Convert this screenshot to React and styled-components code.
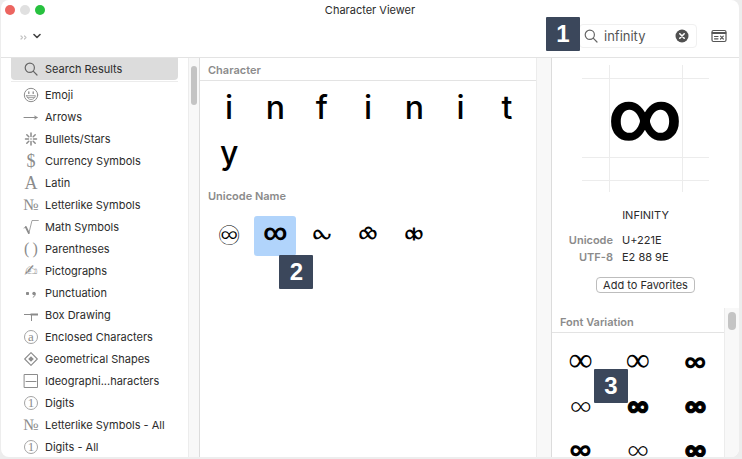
import React, { useState } from 'react';
import styled, { createGlobalStyle } from 'styled-components';

const colors = {
  text: '#2b2b2b',
  muted: '#8b8b8b',
  icon: '#8c8c8c',
  line: '#e3e3e3',
  track: '#f8f8f8',
  thumb: '#c4c4c4',
  badge: '#3b475b',
  selected: '#b1d4fb',
};

const GlobalStyle = createGlobalStyle`
  * { box-sizing: border-box; }

  body {
    margin: 0;
    background: #ededed;
    color: ${colors.text};
    font-family: Inter, 'Liberation Sans', sans-serif;
    font-size: 11px;
    line-height: 16px;
  }

  button, input { font: inherit; color: inherit; }
`;

const Window = styled.div`
  display: flex;
  flex-direction: column;
  height: calc(100vh - 2px);
  margin: 0 3px 2px 1px;
  background: #fff;
  border-radius: 8px;
  overflow: hidden;
`;

const TitleBar = styled.header`
  display: grid;
  grid-template-columns: 1fr auto 1fr;
  align-items: center;
  flex: none;
  height: 20px;
  padding: 0 4px;
`;

const Lights = styled.div`
  display: flex;
  gap: 5px;
`;

const Light = styled.button`
  width: 10px;
  height: 10px;
  padding: 0;
  border: 0;
  border-radius: 50%;
  background: ${props => props.$color};
`;

const Title = styled.h1`
  margin: 0;
  font-size: 11px;
  font-weight: 400;
`;

const Toolbar = styled.div`
  display: flex;
  align-items: center;
  justify-content: space-between;
  flex: none;
  height: 38px;
  padding: 0 12px 6px 18px;
  border-bottom: 1px solid ${colors.line};
`;

const PlainButton = styled.button`
  display: flex;
  align-items: center;
  gap: 4px;
  padding: 0;
  border: 0;
  background: none;
`;

const ToolbarEnd = styled.div`
  display: flex;
  align-items: center;
  gap: 14px;
`;

const SearchBox = styled.label`
  position: relative;
  display: flex;
  align-items: center;
  gap: 6px;
  width: 118px;
  height: 24px;
  padding: 0 7px 0 4px;
  border: 1px solid #f0f0f0;
  border-radius: 4px;
  color: #666;
`;

const SearchInput = styled.input`
  flex: 1;
  min-width: 0;
  padding: 0;
  border: 0;
  outline: none;
  background: none;
  color: #555;
  font-size: 13px;
`;

const Badge = styled.span`
  position: absolute;
  top: ${props => props.$top};
  left: ${props => props.$left};
  z-index: 1;
  width: 34px;
  height: 34px;
  border-radius: 1px;
  background: ${colors.badge};
  color: #fff;
  font: bold 24px/34px 'Liberation Sans', sans-serif;
  text-align: center;
  -webkit-text-stroke: 0;
`;

const Body = styled.div`
  display: flex;
  flex: 1;
  min-height: 0;
`;

const Pane = styled.div`
  display: flex;
  flex: ${props => props.$flex || 'none'};
  min-width: 0;
  min-height: 0;
  width: ${props => props.$width || 'auto'};
  border-right: ${props => (props.$divided ? '1px solid #dcdcdc' : 0)};
`;

const Scroller = styled.div`
  flex: 1;
  min-width: 0;
  overflow: hidden;
`;

const Track = styled.div`
  flex: none;
  width: ${props => props.$width};
  padding: ${props => props.$padding};
  border-left: 1px solid #ececec;
  background: ${colors.track};
`;

const Thumb = styled.div`
  height: ${props => props.$height};
  border-radius: 4px;
  background: ${colors.thumb};
`;

const CategoryList = styled.ul`
  margin: 0;
  padding: 0 10px;
  list-style: none;
`;

// the search results entry is set apart from the real categories
const Category = styled.li`
  &:first-child {
    margin-bottom: 2px;
    padding-bottom: 1px;
    border-bottom: 1px solid #ececec;
  }
`;

const CategoryButton = styled.button`
  display: flex;
  align-items: center;
  gap: 6px;
  width: 100%;
  height: 22px;
  padding: 0 10px 0 12px;
  border: 0;
  border-radius: ${props => (props.$active ? '0 0 4px 4px' : 0)};
  background: ${props => (props.$active ? '#dcdcdc' : 'none')};
  text-align: left;
  white-space: nowrap;
`;

const IconSlot = styled.span`
  display: flex;
  align-items: center;
  justify-content: center;
  flex: none;
  width: 16px;
  height: 20px;
  color: ${props => (props.$dark ? '#666' : colors.icon)};
  font: 16px/20px 'Liberation Serif', 'DejaVu Sans', serif;

  svg { flex: none; }
`;

const LargeGlyph = styled.span`
  font-size: 18px;
`;

const HandGlyph = styled.span`
  font-family: 'DejaVu Sans', sans-serif;
`;

const CircledGlyph = styled.span`
  flex: none;
  width: 14px;
  height: 14px;
  border: 1px solid #a4a4a4;
  border-radius: 50%;
  font-size: 13px;
  line-height: 12px;
  text-align: center;
`;

const SectionTitle = styled.h2`
  margin: 0;
  padding: ${props => props.$padding || '4px 8px 2px'};
  border-bottom: ${props => (props.$lined ? `1px solid ${colors.line}` : 0)};
  color: ${colors.muted};
  font-size: 11px;
  font-weight: 600;
  line-height: 16px;
`;

const CharacterGrid = styled.div`
  display: grid;
  grid-template-columns: repeat(7, 1fr);
  justify-items: center;
  padding: ${props => props.$padding};
`;

const CharacterCell = styled.button`
  position: relative;
  display: flex;
  align-items: center;
  justify-content: center;
  width: 42px;
  height: ${props => props.$height};
  padding: ${props => (props.$weight === 700 ? '0 0 6px' : 0)};
  border: 0;
  border-radius: 3px;
  background: ${props => (props.$selected ? colors.selected : 'none')};
  color: #000;
  font-family: ${props => props.$font || 'inherit'};
  font-size: ${props => props.$size || '32px'};
  font-weight: ${props => props.$weight || 500};
  line-height: ${props => props.$height};
`;

const Details = styled.aside`
  display: flex;
  flex-direction: column;
  flex: none;
  width: 187px;
  min-height: 0;
`;

const Summary = styled.section`
  display: flex;
  flex-direction: column;
  align-items: center;
  flex: none;
  padding: 7px 0 15px;
`;

const CharacterName = styled.p`
  margin: 15px 0 9px;
`;

const Codes = styled.dl`
  display: grid;
  grid-template-columns: 61px 1fr;
  column-gap: 9px;
  width: 100%;
  margin: 0 0 11px;
  line-height: 17px;

  dt {
    color: ${colors.muted};
    font-weight: 600;
    text-align: right;
  }

  dd { margin: 0; }
`;

const FavoriteButton = styled.button`
  height: 16px;
  padding: 0 6px;
  border: 1px solid #bdbdbd;
  border-radius: 4px;
  background: #fff;
  line-height: 14px;
`;

const VariationGrid = styled.div`
  display: grid;
  grid-template-columns: repeat(3, 1fr);
  grid-auto-rows: 44px;
  padding-top: 5px;
`;

const Variation = styled.button`
  position: relative;
  padding: 0;
  border: 0;
  background: none;
  color: #000;
  font-family: ${props => props.$font};
  font-size: ${props => props.$size};
  font-weight: ${props => props.$weight || 400};
  -webkit-text-stroke: ${props => props.$stroke || 0};
  line-height: 44px;
`;

const Svg = ({ size = 16, width, height, children, ...rest }) => (
  <svg
    width={width || size}
    height={height || size}
    viewBox={`0 0 ${width || size} ${height || size}`}
    fill="none"
    stroke="currentColor"
    strokeLinecap="round"
    strokeLinejoin="round"
    aria-hidden="true"
    {...rest}
  >
    {children}
  </svg>
);

const SearchIcon = () => (
  <Svg size={14} strokeWidth="1.2">
    <circle cx="5.8" cy="5.8" r="4.6" />
    <path d="M9.2 9.2 13 13" />
  </Svg>
);

const icons = {
  emoji: (
    <Svg strokeWidth="1">
      <circle cx="8" cy="8" r="6.7" />
      <path d="M5.8 4.8v1.6M10.2 4.8v1.6" strokeWidth="1.3" />
      <path d="M3.6 8.7h8.8c-.4 2.3-2.2 3.8-4.4 3.8S4 11 3.6 8.7ZM4.6 10.4h6.8" strokeWidth=".8" />
    </Svg>
  ),
  arrow: (
    <Svg strokeWidth="1">
      <path d="M1 8.500h13" />
      <path d="m11.800 6.800 2.900 1.700-2.900 1.700Z" fill="currentColor" strokeWidth=".3" />
    </Svg>
  ),
  burst: (
    <Svg strokeWidth="1.5">
      <path d="M8 2v3.500M8 10.500V14M2.500 8h3M10.500 8h3M3.800 3.800l2 2M10.200 10.200l2 2M3.800 12.200l2-2M10.200 5.800l2-2" />
      <circle cx="8" cy="8" r=".8" fill="currentColor" stroke="none" />
    </Svg>
  ),
  root: (
    <Svg strokeWidth=".8">
      <path d="m1 9 1.8-1" />
      <path d="m2.8 8 3 6" strokeWidth="1.8" />
      <path d="M5.8 14.5 9 1.5h6.3" />
    </Svg>
  ),
  punctuation: (
    <Svg strokeWidth="1">
      <rect x="3" y="7" width="3" height="3" rx=".8" fill="currentColor" stroke="none" />
      <circle cx="11" cy="8.5" r="1.7" fill="currentColor" stroke="none" />
      <path d="M12.2 8.8c0 1.8-.7 2.8-2 3.4" />
    </Svg>
  ),
  box: (
    <Svg strokeWidth="1" strokeLinecap="butt">
      <path d="M1 7.5h7M8.5 7v7" />
      <path d="M7.5 7.5H15" strokeWidth="2" />
    </Svg>
  ),
  diamond: (
    <Svg strokeWidth="1.1">
      <path d="M8 1.7 14.3 8 8 14.3 1.7 8Z" />
      <path d="M8 5.2 10.8 8 8 10.8 5.2 8Z" fill="currentColor" stroke="none" />
    </Svg>
  ),
  ideograph: (
    <Svg strokeWidth="1" strokeLinejoin="miter">
      <path d="M1.5 1.5h13v13h-13ZM3 8.5h10" />
    </Svg>
  ),
};

const categories = [
  { name: 'Search Results', icon: <SearchIcon /> },
  { name: 'Emoji', icon: icons.emoji },
  { name: 'Arrows', icon: icons.arrow },
  { name: 'Bullets/Stars', icon: icons.burst },
  { name: 'Currency Symbols', icon: <LargeGlyph>$</LargeGlyph> },
  { name: 'Latin', icon: <LargeGlyph>A</LargeGlyph> },
  { name: 'Letterlike Symbols', icon: '№' },
  { name: 'Math Symbols', icon: icons.root },
  { name: 'Parentheses', icon: '(\u2009)' },
  { name: 'Pictographs', icon: <HandGlyph>✍</HandGlyph> },
  { name: 'Punctuation', icon: icons.punctuation },
  { name: 'Box Drawing', icon: icons.box },
  { name: 'Enclosed Characters', icon: <CircledGlyph>a</CircledGlyph> },
  { name: 'Geometrical Shapes', icon: icons.diamond },
  { name: 'Ideographi...haracters', icon: icons.ideograph },
  { name: 'Digits', icon: <CircledGlyph>1</CircledGlyph> },
  { name: 'Letterlike Symbols - All', icon: '№' },
  { name: 'Digits - All', icon: <CircledGlyph>1</CircledGlyph> },
];

const dejavu = "'DejaVu Sans', sans-serif";
const roboto = 'Roboto, sans-serif';
const lato = 'Lato, sans-serif';
const serif = "'Liberation Serif', serif";

const nameMatches = [
  { name: 'Permanent paper sign', glyph: '♾', font: dejavu, size: '27px', weight: 400 },
  { name: 'Infinity', glyph: '∞', font: roboto, size: '23px', weight: 700, selected: true },
  { name: 'Incomplete infinity', glyph: '⧜', font: dejavu, size: '22px', weight: 700 },
  { name: 'Tie over infinity', glyph: '⧝', font: dejavu, size: '22px', weight: 700 },
  { name: 'Infinity negated with vertical bar', glyph: '⧞', font: dejavu, size: '22px', weight: 700 },
];

const variations = [
  { font: serif, size: '34px' },
  { font: serif, size: '34px' },
  { font: lato, size: '31px', weight: 700 },
  { font: lato, size: '31px', weight: 300 },
  { font: lato, size: '30px', weight: 900, stroke: '1px #000' },
  { font: lato, size: '30px', weight: 900, stroke: '1px #000' },
  { font: lato, size: '31px', weight: 700 },
  { font: lato, size: '31px', weight: 300 },
  { font: lato, size: '30px', weight: 900, stroke: '1px #000' },
];

const PreviewDrawing = () => (
  <svg width="127" height="127" viewBox="0 0 127 127" role="img" aria-label="Infinity">
    <path
      d="M27.5 0v127M100.5 0v127M0 13.5h127M0 92.5h127M0 115.5h127"
      stroke="#ececec"
      fill="none"
    />
    <text x="63" y="75" textAnchor="middle" fontFamily="Roboto, sans-serif" fontSize="71" fontWeight="700">
      ∞
    </text>
  </svg>
);

const App = () => {
  const [query, setQuery] = useState('infinity');
  const [active, setActive] = useState('Search Results');

  return (
    <>
      <GlobalStyle />
      <Window>
        <TitleBar>
          <Lights>
            <Light $color="#ec6560" aria-label="Close" />
            <Light $color="#e0e0e0" aria-label="Minimize" />
            <Light $color="#27c13f" aria-label="Zoom" />
          </Lights>
          <Title>Character Viewer</Title>
        </TitleBar>

        <Toolbar>
          <PlainButton aria-label="View options">
            <Svg size={10} stroke="#c4c4c4" strokeWidth="1.2">
              <path d="m2 5 1.5 1.5L2 8M5.5 5 7 6.5 5.5 8" />
            </Svg>
            <Svg width={8} height={8} stroke="#444" strokeWidth="1.6">
              <path d="m1 2.5 3 3 3-3" />
            </Svg>
          </PlainButton>
          <ToolbarEnd>
            <SearchBox>
              <Badge $top="-8px" $left="-34px">1</Badge>
              <SearchIcon />
              <SearchInput
                aria-label="Search"
                value={query}
                onChange={e => setQuery(e.target.value)}
              />
              <PlainButton aria-label="Clear search" onClick={() => setQuery('')}>
                <Svg size={14} strokeWidth="1.6">
                  <circle cx="7" cy="7" r="6.5" fill="#505050" stroke="none" />
                  <path d="m4.8 4.8 4.4 4.4M9.2 4.8 4.8 9.2" stroke="#fff" />
                </Svg>
              </PlainButton>
            </SearchBox>
            <PlainButton aria-label="Collapse window">
              <Svg width={16} height={14} stroke="#555" strokeWidth="1.2">
                <rect x="1" y="1.5" width="14" height="11" rx="1.5" />
                <path d="M1.5 4h13" strokeWidth="1.8" />
                <path d="M3.5 7.5h3.5M3.5 9.8h3.5M9.5 7.2l2.8 2.8M12.3 7.2 9.5 10" />
              </Svg>
            </PlainButton>
          </ToolbarEnd>
        </Toolbar>

        <Body>
          <Pane as="nav" $width="199px" $divided>
            <Scroller>
              <CategoryList>
                {categories.map(({ name, icon }) => (
                  <Category key={name}>
                    <CategoryButton $active={name === active} onClick={() => setActive(name)}>
                      <IconSlot $dark={name === active}>{icon}</IconSlot>
                      {name}
                    </CategoryButton>
                  </Category>
                ))}
              </CategoryList>
            </Scroller>
            <Track $width="11px" $padding="8px 2px">
              <Thumb $height="39px" />
            </Track>
          </Pane>

          <Pane as="main" $flex="1" $divided>
            <Scroller>
              <SectionTitle $lined>Character</SectionTitle>
              <CharacterGrid $padding="4px 6px 9px">
                {[...'infinity'].map((letter, i) => (
                  <CharacterCell key={i} $height="45px">{letter}</CharacterCell>
                ))}
              </CharacterGrid>
              <SectionTitle>Unicode Name</SectionTitle>
              <CharacterGrid $padding="10px 6px">
                {nameMatches.map(({ name, glyph, font, size, weight, selected }) => (
                  <CharacterCell
                    key={name}
                    $height="40px"
                    $font={font}
                    $size={size}
                    $weight={weight}
                    $selected={selected}
                    aria-label={name}
                  >
                    {glyph}
                    {selected && <Badge $top="39px" $left="25px">2</Badge>}
                  </CharacterCell>
                ))}
              </CharacterGrid>
            </Scroller>
            <Track $width="15px" $padding="0" />
          </Pane>

          <Details>
            <Summary>
              <PreviewDrawing />
              <CharacterName>INFINITY</CharacterName>
              <Codes>
                <dt>Unicode</dt>
                <dd>U+221E</dd>
                <dt>UTF-8</dt>
                <dd>E2 88 9E</dd>
              </Codes>
              <FavoriteButton>Add to Favorites</FavoriteButton>
            </Summary>
            <Pane $flex="1">
              <Scroller>
                <SectionTitle $lined $padding="6px 8px 2px">Font Variation</SectionTitle>
                <VariationGrid>
                  {variations.map(({ font, size, weight, stroke }, i) => (
                    <Variation key={i} $font={font} $size={size} $weight={weight} $stroke={stroke}>
                      ∞
                      {i === 3 && <Badge $top="-13px" $left="42px">3</Badge>}
                    </Variation>
                  ))}
                </VariationGrid>
              </Scroller>
              <Track $width="15px" $padding="4px 3px">
                <Thumb $height="18px" />
              </Track>
            </Pane>
          </Details>
        </Body>
      </Window>
    </>
  );
};

export default App;
